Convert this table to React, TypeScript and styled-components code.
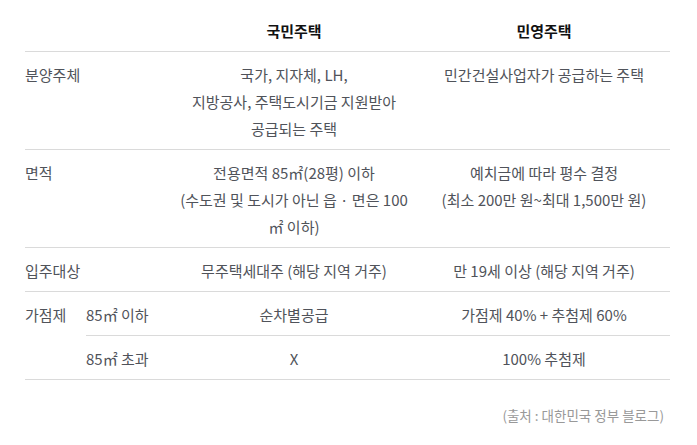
import React from "react";
import styled, { createGlobalStyle } from "styled-components";

const GlobalStyle = createGlobalStyle`
  html, body {
    margin: 0;
    padding: 0;
    background: #ffffff;
  }
  body {
    font-family: "Noto Sans CJK KR", "Noto Sans", sans-serif;
  }
`;

const Page = styled.div`
  width: 697px;
  height: 445px;
  padding: 0 27px 0 25px;
  box-sizing: border-box;
`;

const Table = styled.table`
  width: 645px;
  border-collapse: collapse;
  table-layout: fixed;
  font-size: 15px;
  line-height: 27px;
  color: #50535a;
`;

const HeadCell = styled.th`
  padding: 17px 0 7px;
  font-weight: 700;
  color: #111;
  text-align: center;
  border-bottom: 1px solid #dadada;
`;

const Label = styled.td`
  padding: 9px 0 7px;
  text-align: left;
  vertical-align: top;
  border-bottom: 1px solid #dadada;
`;

const Cell = styled.td`
  padding: 9px 0 7px;
  text-align: center;
  vertical-align: top;
  border-bottom: 1px solid #dadada;
`;

const Source = styled.div`
  width: 645px;
  margin-top: 25px;
  padding-right: 6px;
  box-sizing: border-box;
  text-align: right;
  font-size: 13.5px;
  line-height: 20px;
  color: #999;
`;

export default function App() {
  return (
    <Page>
      <GlobalStyle />
      <Table>
        <colgroup>
          <col style={{ width: 61 }} />
          <col style={{ width: 84 }} />
          <col style={{ width: 248 }} />
          <col style={{ width: 252 }} />
        </colgroup>
        <thead>
          <tr>
            <HeadCell colSpan={2} />
            <HeadCell>국민주택</HeadCell>
            <HeadCell>민영주택</HeadCell>
          </tr>
        </thead>
        <tbody>
          <tr>
            <Label colSpan={2}>분양주체</Label>
            <Cell>
              국가, 지자체, LH,
              <br />
              지방공사, 주택도시기금 지원받아
              <br />
              공급되는 주택
            </Cell>
            <Cell>민간건설사업자가 공급하는 주택</Cell>
          </tr>
          <tr>
            <Label colSpan={2}>면적</Label>
            <Cell>
              전용면적 85㎡(28평) 이하
              <br />
              (수도권 및 도시가 아닌 읍 · 면은 100
              <br />
              ㎡ 이하)
            </Cell>
            <Cell>
              예치금에 따라 평수 결정
              <br />
              (최소 200만 원~최대 1,500만 원)
            </Cell>
          </tr>
          <tr>
            <Label colSpan={2}>입주대상</Label>
            <Cell>무주택세대주 (해당 지역 거주)</Cell>
            <Cell>만 19세 이상 (해당 지역 거주)</Cell>
          </tr>
          <tr>
            <Label rowSpan={2}>가점제</Label>
            <Label>85㎡ 이하</Label>
            <Cell>순차별공급</Cell>
            <Cell>가점제 40% + 추첨제 60%</Cell>
          </tr>
          <tr>
            <Label>85㎡ 초과</Label>
            <Cell>X</Cell>
            <Cell>100% 추첨제</Cell>
          </tr>
        </tbody>
      </Table>
      <Source>(출처 : 대한민국 정부 블로그)</Source>
    </Page>
  );
}
